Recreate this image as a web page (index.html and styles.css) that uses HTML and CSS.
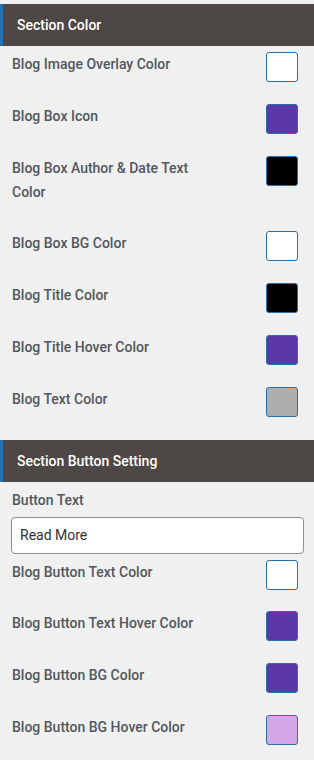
FILE: index.html
```html
<!DOCTYPE html>
<html lang="en">
<head>
<meta charset="utf-8">
<title>Section settings</title>
<link rel="stylesheet" href="styles.css">
</head>
<body>
<div class="panel">
  <section class="section first">
    <div class="section-head">Section Color</div>
    <div class="section-body">
      <div class="row"><span class="label">Blog Image Overlay Color</span><span class="swatch white"></span></div>
      <div class="row"><span class="label">Blog Box Icon</span><span class="swatch purple"></span></div>
      <div class="row"><span class="label">Blog Box Author &amp; Date Text Color</span><span class="swatch black"></span></div>
      <div class="row"><span class="label">Blog Box BG Color</span><span class="swatch white"></span></div>
      <div class="row"><span class="label">Blog Title Color</span><span class="swatch black"></span></div>
      <div class="row"><span class="label">Blog Title Hover Color</span><span class="swatch purple"></span></div>
      <div class="row"><span class="label">Blog Text Color</span><span class="swatch gray"></span></div>
    </div>
  </section>
  <section class="section second">
    <div class="section-head">Section Button Setting</div>
    <div class="section-body">
      <div class="field-label">Button Text</div>
      <div class="text-input">Read More</div>
      <div class="row"><span class="label">Blog Button Text Color</span><span class="swatch white"></span></div>
      <div class="row"><span class="label">Blog Button Text Hover Color</span><span class="swatch purple"></span></div>
      <div class="row"><span class="label">Blog Button BG Color</span><span class="swatch purple"></span></div>
      <div class="row"><span class="label">Blog Button BG Hover Color</span><span class="swatch lilac"></span></div>
    </div>
  </section>
</div>
</body>
</html>
```

FILE: styles.css
```css
html, body {
  margin: 0;
  padding: 0;
  background: #f0f0f0;
}

body {
  font-family: Roboto, "Liberation Sans", Arial, sans-serif;
  font-size: 14px;
  color: #50575e;
}

.section.first {
  margin-top: 4px;
}

.section.second {
  margin-top: 1px;
}

.section-head {
  height: 42px;
  box-sizing: border-box;
  display: flex;
  align-items: center;
  padding-left: 14px;
  background: #4d4745;
  border-left: 3px solid #2271b1;
  color: #ffffff;
  font-size: 14px;
  font-weight: 500;
}

.section-body {
  padding: 6px 16px 0 12px;
}

.row {
  display: flex;
  justify-content: space-between;
  align-items: flex-start;
}

.label {
  width: 200px;
  line-height: 24px;
  padding-bottom: 27.8px;
  font-weight: 500;
}

.swatch {
  width: 32px;
  height: 30px;
  box-sizing: border-box;
  border: 1px solid #2a6ea6;
  border-radius: 3px;
  flex: none;
}

.swatch.white { background: #ffffff; }
.swatch.purple { background: #5b37a8; }
.swatch.black { background: #000000; }
.swatch.gray { background: #aeaeae; }
.swatch.lilac { background: #d4a8e6; }

.field-label {
  line-height: 24px;
  font-weight: 500;
}

.text-input {
  margin: 5px 0 6px -1px;
  width: 293px;
  height: 37px;
  box-sizing: border-box;
  border: 1px solid #8c8f94;
  border-radius: 4px;
  background: #ffffff;
  padding: 0 8px;
  display: flex;
  align-items: center;
  color: #2c3338;
  font-size: 14px;
}
```
